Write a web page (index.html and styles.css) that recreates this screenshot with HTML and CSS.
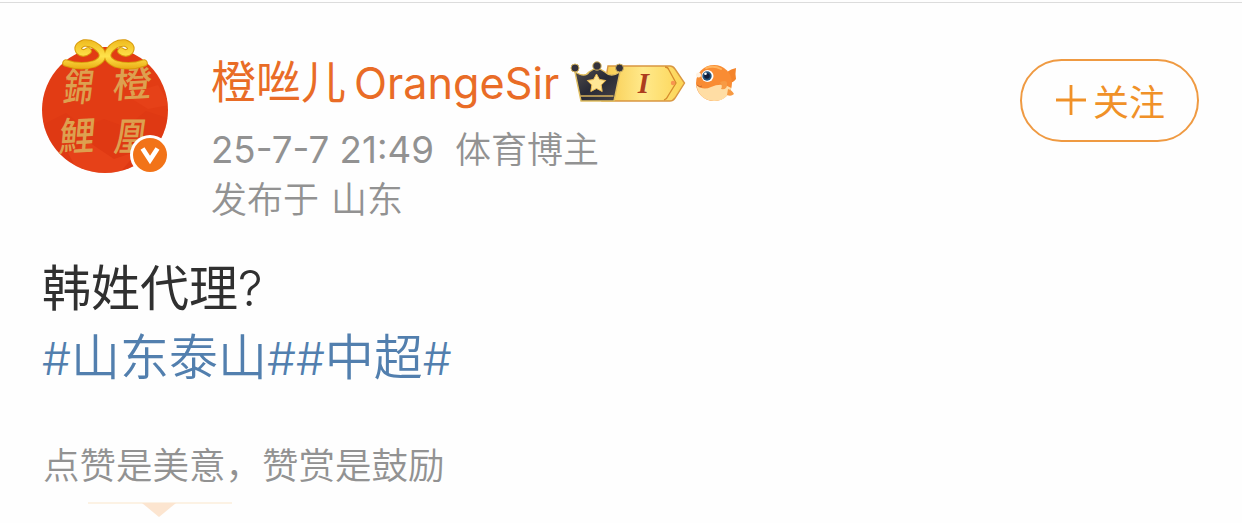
FILE: index.html
```html
<!DOCTYPE html>
<html lang="zh-CN">
<head>
    <meta charset="UTF-8">
    <title>微博</title>
    <link rel="stylesheet" href="styles.css">
</head>
<body>
    <article class="post">
        <header class="post-header">
            <div class="avatar">
                <svg class="avatar-img" viewBox="0 0 130 140" aria-hidden="true">
                    <defs>
                        <clipPath id="disc"><circle cx="65" cy="73" r="63"/></clipPath>
                        <linearGradient id="gold" gradientUnits="userSpaceOnUse" x1="0" y1="4" x2="0" y2="32">
                            <stop offset="0" stop-color="#f0bd22"/>
                            <stop offset=".55" stop-color="#ffe24a"/>
                            <stop offset="1" stop-color="#e9ac14"/>
                        </linearGradient>
                    </defs>
                    <circle cx="65" cy="73" r="63" fill="#e23c14"/>
                    <g clip-path="url(#disc)" fill="#d93412" opacity=".35">
                        <path d="M2 88l24-12 18 14 20-8 22 8 20-16 24 8v60H2z"/>
                        <path d="M86 40l18 12 14-4 12 20-22 4-16-10z" fill="#ee4a20"/>
                        <path d="M28 116l22-10 24 16 24-8-20 24H40z" fill="#ee4a20"/>
                    </g>
                    <g class="avatar-text">
                        <text transform="translate(22 64) skewX(-8) scale(.82 1.12)">錦</text>
                        <text transform="translate(72 61) rotate(-3) skewX(-8) scale(1.08 1)">橙</text>
                        <text transform="translate(18 114) rotate(-3) skewX(-8) scale(1 1.08)">鯉</text>
                        <text transform="translate(73 114) skewX(-8) scale(.9 1.1)">凰</text>
                    </g>
                    <g fill="none" stroke-linecap="round" stroke-linejoin="round">
                        <path d="M26 26Q40 31 54 27Q66 22 61 14Q54 5 44 6Q36 9 39 14Q43 18 48 14M104 26Q90 31 76 27Q64 22 69 14Q75 5 85 6Q93 9 90 14Q86 18 81 14" stroke="#d99a0b" stroke-width="7.500"/>
                        <path d="M26 26Q40 31 54 27Q66 22 61 14Q54 5 44 6Q36 9 39 14Q43 18 48 14M104 26Q90 31 76 27Q64 22 69 14Q75 5 85 6Q93 9 90 14Q86 18 81 14" stroke="url(#gold)" stroke-width="5.500"/>
                    </g>
                </svg>
                <svg class="verified" viewBox="0 0 40 40" aria-label="认证">
                    <circle cx="20" cy="20" r="20" fill="#fff"/>
                    <circle cx="20" cy="20" r="17" fill="#f27318"/>
                    <path d="M12.500 13.500L20 25l7.500-11.500" fill="none" stroke="#fff" stroke-width="4.700"/>
                </svg>
            </div>
            <div class="author">
                <div class="name-row">
                    <span class="name"><span>橙咝儿</span><span class="name-en">OrangeSir</span></span>
                    <svg class="vip" viewBox="0 0 116 44" aria-label="会员">
                        <defs>
                            <linearGradient id="plate" x1="0" y1="0" x2="1" y2="0">
                                <stop offset="0" stop-color="#f7c94b"/>
                                <stop offset=".5" stop-color="#ffe98b"/>
                                <stop offset="1" stop-color="#fcd454"/>
                            </linearGradient>
                            <linearGradient id="crown" x1="0" y1="0" x2="1" y2="1">
                                <stop offset="0" stop-color="#55504f"/>
                                <stop offset=".5" stop-color="#282a35"/>
                                <stop offset="1" stop-color="#474348"/>
                            </linearGradient>
                        </defs>
                        <path d="M38 5h62q3 0 5 3l9.500 14L105 37q-2 3-5 3H32z" fill="url(#plate)" stroke="#d99741" stroke-width="1.400"/>
                        <path d="M95 6q3 0 4 3l7 13-8 13q-1 3-4 4" fill="none" stroke="#d58b2c" stroke-width="1.300"/>
                        <circle cx="103" cy="22" r="2.200" fill="#f89550"/>
                        <path d="M5 11q10 6 14 0l8-5 8 5q6 6 15 0l-6 29H11z" fill="url(#crown)" stroke="#e1bf61" stroke-width="1.400" stroke-linejoin="round"/>
                        <path d="M10.500 35h33" fill="none" stroke="#d7b25c" stroke-width="1.500"/>
                        <g fill="#34323b" stroke="#d3b360" stroke-width="1">
                            <circle cx="5" cy="7" r="4"/>
                            <circle cx="27" cy="5" r="4.200"/>
                            <circle cx="49.500" cy="7" r="4"/>
                        </g>
                        <path d="M26.500 13l3 5.500 6.200 1-4.500 4.500 1 6.500-5.700-3-5.700 3 1-6.500-4.500-4.500 6.200-1z" fill="#ffe696" stroke="#efbd53" stroke-linejoin="round"/>
                        <text class="vip-level" x="73.500" y="31.500">I</text>
                    </svg>
                    <svg class="fish" viewBox="0 0 44 40" aria-hidden="true">
                        <path d="M33 9q4-3 9-4-1 6 0 11-3 4-7 4z" fill="#f4842b"/>
                        <circle cx="20" cy="20" r="18" fill="#f98c33"/>
                        <path d="M2.300 22Q9 28 17 24Q28 19 37.300 25Q33 38 20 38Q5 37 2.300 22z" fill="#ffdda4"/>
                        <path d="M12 5q8-3 15 1" fill="none" stroke="#ffb45f" stroke-width="2" stroke-linecap="round"/>
                        <path d="M26 19q8-3 7 3 0 5-6 4 2-3-1-7zM34 26q4 1 6 5-3 3-7 1z" fill="#f79a43"/>
                        <circle cx="4.500" cy="12" r="2.500" fill="#fff2e2"/>
                        <circle cx="13.500" cy="13" r="6" fill="#fff"/>
                        <circle cx="13" cy="13" r="4.700" fill="#245279"/>
                        <circle cx="13" cy="13" r="2.800" fill="#101c38"/>
                        <circle cx="11.500" cy="10.800" r="1.300" fill="#fff"/>
                        <path d="M3 22q3 3 5 1" fill="none" stroke="#c66b37"/>
                    </svg>
                </div>
                <div class="meta"><span class="time">25-7-7 21:49</span><span>体育博主</span></div>
                <div class="meta region"><span>发布于</span><span>山东</span></div>
            </div>
            <button class="follow-btn">
                <svg class="plus" viewBox="0 0 30 30" aria-hidden="true">
                    <path d="M15 0v30M0 15h30" stroke="#f09128" stroke-width="2.800"/>
                </svg>
                关注
            </button>
        </header>
        <div class="post-body">
            <p>韩姓代理<span class="question">?</span></p>
            <p class="topics"><span class="mark">#</span>山东泰山<span class="mark">##</span>中超<span class="mark">#</span></p>
        </div>
        <footer class="reward">
            <p>点赞是美意，赞赏是鼓励</p>
            <svg class="reward-line" viewBox="0 0 144 16" aria-hidden="true">
                <path d="M0 1h144" stroke="#fbeedb" stroke-width="1.500"/>
                <path d="M54 1h34L71 15z" fill="#fce5d0"/>
            </svg>
        </footer>
    </article>
</body>
</html>
```
FILE: styles.css
```css
html, body {
    margin: 0;
    padding: 0;
    background: #fefefe;
    font-family: Inter, "Noto Sans CJK SC", sans-serif;
}

p {
    margin: 0;
}

.post {
    box-sizing: border-box;
    height: 521px;
    margin-top: 2px;
    border-top: 1px solid #dcdcdc;
    padding: 34px 43px 0 40px;
    overflow: hidden;
}

.post-header {
    display: flex;
    align-items: flex-start;
    height: 217px;
}

.avatar {
    position: relative;
    width: 130px;
    height: 140px;
    flex: none;
}

.avatar-img {
    display: block;
    width: 130px;
    height: 140px;
}

.avatar-text {
    fill: #dda04f;
    font-family: "Noto Sans CJK TC", sans-serif;
    font-size: 36px;
    font-weight: 500;
}

.verified {
    position: absolute;
    right: 0;
    bottom: 2px;
    width: 40px;
    height: 40px;
}

.author {
    margin-left: 41px;
    padding-top: 14px;
}

.name-row {
    display: flex;
    align-items: center;
    height: 64px;
    margin-bottom: 10px;
}

.name {
    display: flex;
    align-items: baseline;
    gap: 8px;
    color: #e96c26;
    font-size: 45px;
    line-height: 64px;
    white-space: nowrap;
}

.name-en {
    font-size: 43.200px;
}

.vip {
    width: 116px;
    height: 44px;
    margin-left: 11px;
}

.vip-level {
    fill: #ad3d1e;
    font-family: "Liberation Serif", serif;
    font-size: 29px;
    font-style: italic;
    font-weight: bold;
    text-anchor: middle;
}

.fish {
    width: 44px;
    height: 40px;
    margin-left: 8px;
}

.meta {
    display: flex;
    align-items: baseline;
    gap: 21px;
    height: 50px;
    color: #929292;
    font-size: 36px;
    font-weight: 350;
    line-height: 50px;
    white-space: nowrap;
}

.time {
    font-size: 36.700px;
    font-weight: 380;
}

.region {
    gap: 12px;
}

.follow-btn {
    display: flex;
    align-items: center;
    justify-content: center;
    gap: 7px;
    box-sizing: border-box;
    width: 179px;
    height: 83px;
    margin: 22px 0 0 auto;
    padding: 0 0 2px 2px;
    border: 2px solid #ef9a42;
    border-radius: 42px;
    background: none;
    color: #f09128;
    font-family: inherit;
    font-size: 36px;
}

.plus {
    width: 30px;
    height: 30px;
}

.post-body {
    margin-left: 2px;
    color: #303030;
    font-size: 49px;
    line-height: 69px;
}

.question {
    font-size: 49px;
    font-weight: 350;
}

.mark {
    font-size: 45.700px;
}

.topics {
    color: #527fae;
    font-weight: 350;
}

.reward {
    margin: 47px 0 0 3px;
    color: #929292;
    font-size: 36.500px;
    font-weight: 350;
    line-height: 52px;
}

.reward-line {
    display: block;
    width: 144px;
    height: 16px;
    margin: 10px 0 0 45px;
}
```
